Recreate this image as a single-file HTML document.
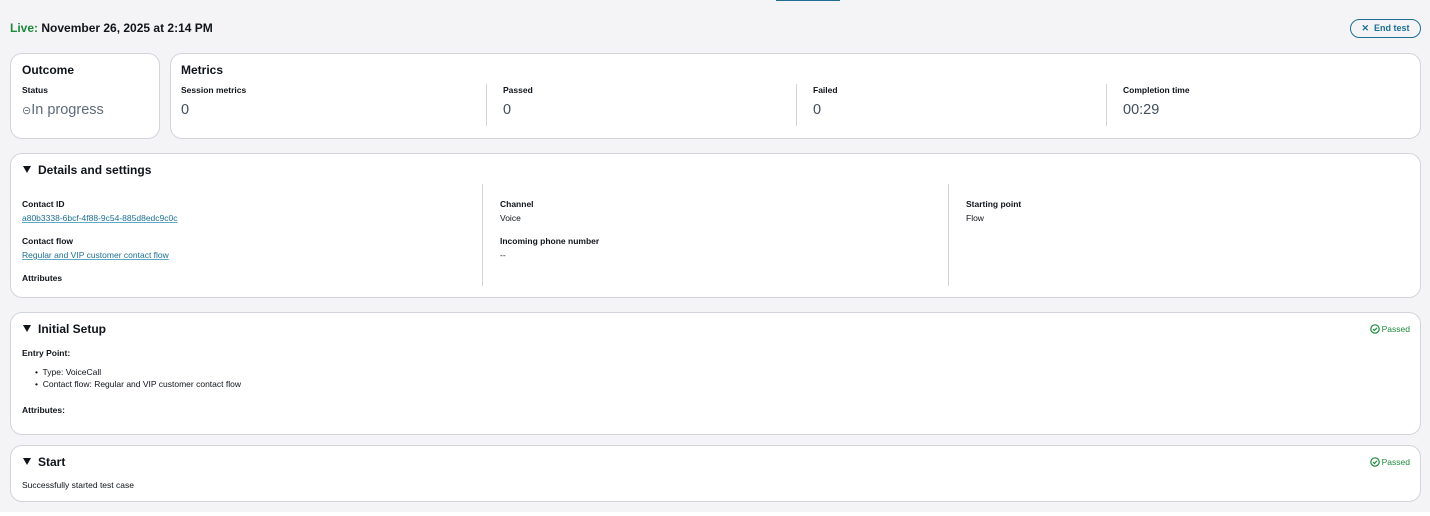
<!DOCTYPE html><html><head><style>
body{margin:0;width:1430px;height:516px;background:#f4f4f6;font-family:"Liberation Sans",sans-serif;color:#0f141a;position:relative;overflow:hidden}
.a{position:absolute}
.card{position:absolute;background:#fff;border:1px solid #d1d5db;border-radius:12px;box-sizing:border-box}
.h{font-weight:bold;font-size:12px}
.l{font-weight:bold;font-size:8.5px}
.v{font-size:14.5px;color:#414d5c}
.s{font-size:8.5px}
.lk{font-size:8.5px;color:#1d6f93;text-decoration:underline;text-decoration-color:#5fa9c6}
.div{position:absolute;width:1px;background:#d1d5db}
.pass{position:absolute;right:10px;font-size:8.5px;color:#1d8a3a;display:flex;align-items:center;gap:2px}
.tri{display:inline-block;width:0;height:0;border-left:4px solid transparent;border-right:4px solid transparent;border-top:7px solid #0f141a;margin-right:7px;vertical-align:1px}
</style></head><body>
<div class="a" style="left:776px;top:0;width:64px;height:1px;background:#1d6f93"></div>
<div class="a" style="left:0;top:512px;width:1430px;height:4px;background:#fff"></div>
<div class="a" style="left:10px;top:21px;font-size:12px;font-weight:bold"><span style="color:#1d8a3a">Live:</span> November 26, 2025 at 2:14 PM</div>
<div class="a" style="left:1350px;top:19px;width:71px;height:19px;border:1.5px solid #1d6f93;border-radius:10px;box-sizing:border-box;color:#1d6f93;font-size:9px;font-weight:bold;line-height:16px;text-align:center">✕&nbsp; End test</div>

<div class="card" style="left:10px;top:53px;width:150px;height:86px">
<div class="a h" style="left:11px;top:9px">Outcome</div>
<div class="a l" style="left:11px;top:31px">Status</div>
<div class="a v" style="left:11px;top:48px;color:#5f6b7a"><span style="font-size:11px">⊝</span>In progress</div>
</div>
<div class="card" style="left:170px;top:53px;width:1251px;height:86px">
<div class="a h" style="left:10px;top:9px">Metrics</div>
<div class="a l" style="left:10px;top:31px">Session metrics</div><div class="a v" style="left:10px;top:48px">0</div>
<div class="div" style="left:315px;top:30px;height:42px"></div>
<div class="a l" style="left:332px;top:31px">Passed</div><div class="a v" style="left:332px;top:48px">0</div>
<div class="div" style="left:625px;top:30px;height:42px"></div>
<div class="a l" style="left:642px;top:31px">Failed</div><div class="a v" style="left:642px;top:48px">0</div>
<div class="div" style="left:935px;top:30px;height:42px"></div>
<div class="a l" style="left:952px;top:31px">Completion time</div><div class="a v" style="left:952px;top:48px">00:29</div>
</div>

<div class="card" style="left:10px;top:153px;width:1411px;height:145px">
<div class="a h" style="left:12px;top:9px"><span class="tri"></span>Details and settings</div>
<div class="a l" style="left:11px;top:45px">Contact ID</div>
<div class="a lk" style="left:11px;top:59px">a80b3338-6bcf-4f88-9c54-885d8edc9c0c</div>
<div class="a l" style="left:11px;top:82px">Contact flow</div>
<div class="a lk" style="left:11px;top:96px">Regular and VIP customer contact flow</div>
<div class="a l" style="left:11px;top:119px">Attributes</div>
<div class="div" style="left:471px;top:30px;height:102px"></div>
<div class="a l" style="left:489px;top:45px">Channel</div><div class="a s" style="left:489px;top:59px">Voice</div>
<div class="a l" style="left:489px;top:82px">Incoming phone number</div><div class="a s" style="left:489px;top:96px">--</div>
<div class="div" style="left:937px;top:30px;height:102px"></div>
<div class="a l" style="left:955px;top:45px">Starting point</div><div class="a s" style="left:955px;top:59px">Flow</div>
</div>

<div class="card" style="left:10px;top:312px;width:1411px;height:123px">
<div class="a h" style="left:12px;top:9px"><span class="tri"></span>Initial Setup</div>
<div class="pass" style="top:11px"><svg width="10" height="10" viewBox="0 0 10 10"><circle cx="5" cy="5" r="4.2" fill="none" stroke="#1d8a3a" stroke-width="1.2"/><path d="M3 5.1l1.4 1.4L7 3.8" fill="none" stroke="#1d8a3a" stroke-width="1.2"/></svg>Passed</div>
<div class="a l" style="left:11px;top:35px">Entry Point:</div>
<div class="a s" style="left:24px;top:54px;line-height:11.5px">•&nbsp; Type: VoiceCall<br>•&nbsp; Contact flow: Regular and VIP customer contact flow</div>
<div class="a l" style="left:11px;top:92px">Attributes:</div>
</div>

<div class="card" style="left:10px;top:445px;width:1411px;height:57px">
<div class="a h" style="left:12px;top:9px"><span class="tri"></span>Start</div>
<div class="pass" style="top:11px"><svg width="10" height="10" viewBox="0 0 10 10"><circle cx="5" cy="5" r="4.2" fill="none" stroke="#1d8a3a" stroke-width="1.2"/><path d="M3 5.1l1.4 1.4L7 3.8" fill="none" stroke="#1d8a3a" stroke-width="1.2"/></svg>Passed</div>
<div class="a s" style="left:11px;top:34px">Successfully started test case</div>
</div>
</body></html>
